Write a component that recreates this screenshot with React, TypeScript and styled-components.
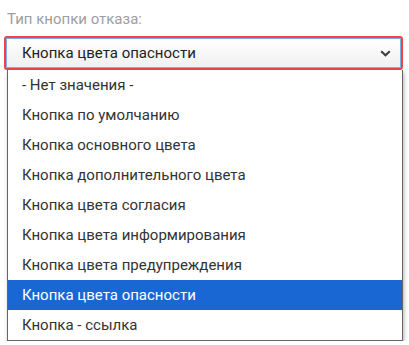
import styled, { createGlobalStyle } from "styled-components";

const GlobalStyle = createGlobalStyle`
  html, body {
    margin: 0;
    background: #ffffff;
    font-family: Roboto, "Noto Sans", sans-serif;
  }
`;

const Wrap = styled.div`
  padding: 9px 6px 0 4px;
  width: 409px;
  box-sizing: border-box;
`;

const Label = styled.div`
  margin-left: 3px;
  height: 20px;
  line-height: 20px;
  font-size: 15px;
  color: #9e9e9e;
`;

const Field = styled.div`
  margin-top: 7px;
`;

const Select = styled.div`
  height: 34px;
  box-sizing: border-box;
  border: 2px solid #ef4444;
  border-radius: 3px;
  display: flex;
`;

const SelectInner = styled.div`
  flex: 1;
  display: flex;
  align-items: center;
  justify-content: space-between;
  border: 1px solid #7eaee6;
  background: linear-gradient(#ffffff, #f0f0f0);
  padding: 0 9px 0 15px;
  font-size: 15px;
  color: #222;
`;

const List = styled.ul`
  list-style: none;
  margin: 0 0 0 3px;
  padding: 0;
  width: 396px;
  box-sizing: border-box;
  background: #fff;
  border: 1px solid #666;
  border-top: none;
  box-shadow: 1px 2px 4px rgba(0, 0, 0, 0.3);
`;

const Item = styled.li<{ $active?: boolean }>`
  height: 30px;
  line-height: 30px;
  padding-left: 14px;
  font-size: 15px;
  color: ${({ $active }) => ($active ? "#ffffff" : "#333333")};
  background: ${({ $active }) => ($active ? "#1967d2" : "transparent")};
`;

const options = [
  "- Нет значения -",
  "Кнопка по умолчанию",
  "Кнопка основного цвета",
  "Кнопка дополнительного цвета",
  "Кнопка цвета согласия",
  "Кнопка цвета информирования",
  "Кнопка цвета предупреждения",
  "Кнопка цвета опасности",
  "Кнопка - ссылка",
];

const selected = "Кнопка цвета опасности";

const Chevron = () => (
  <svg width="11" height="7" viewBox="0 0 11 7">
    <path d="M1.2 1.2 L5.5 5.3 L9.8 1.2" fill="none" stroke="#3a3a3a" strokeWidth="2" />
  </svg>
);

const App = () => (
  <Wrap>
    <GlobalStyle />
    <Label>Тип кнопки отказа:</Label>
    <Field>
      <Select>
        <SelectInner>
          <span>{selected}</span>
          <Chevron />
        </SelectInner>
      </Select>
      <List>
        {options.map((o) => (
          <Item key={o} $active={o === selected}>
            {o}
          </Item>
        ))}
      </List>
    </Field>
  </Wrap>
);

export default App;
